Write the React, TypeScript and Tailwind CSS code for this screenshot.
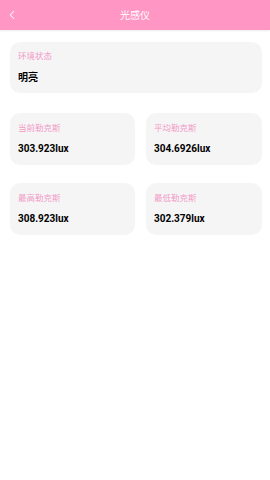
import { ChevronLeft } from 'lucide-react';

const stats = [
  { label: '当前勒克斯', value: '303.923lux' },
  { label: '平均勒克斯', value: '304.6926lux' },
  { label: '最高勒克斯', value: '308.923lux' },
  { label: '最低勒克斯', value: '302.379lux' },
];

function StatCard({ label, value }: { label: string; value: string }) {
  return (
    <div className="flex h-[52px] flex-col justify-center gap-[11px] rounded-[10px] bg-[#f5f5f5] px-[8px]">
      <div className="text-[8.5px] leading-none text-[#f29ac7]">{label}</div>
      <div className="text-[10px] font-bold leading-none text-black">{value}</div>
    </div>
  );
}

export default function App() {
  return (
    <div
      className="min-h-[480px] w-[270px] bg-white"
      style={{ fontFamily: 'Roboto, "Noto Sans CJK SC", sans-serif' }}
    >
      <header className="relative flex h-[30px] items-center justify-center bg-[#ff96c4] shadow-[0_1px_2px_rgba(0,0,0,0.08)]">
        <ChevronLeft className="absolute left-[5px] top-[8px] h-[14px] w-[14px] text-white" strokeWidth={1.75} />
        <h1 className="text-[10px] text-white">光感仪</h1>
      </header>
      <main className="flex flex-col gap-[20px] pt-[12px] pl-[10px] pr-[8px]">
        <div className="flex h-[51px] flex-col justify-center gap-[12px] rounded-[10px] bg-[#f5f5f5] px-[8px]">
          <div className="text-[8.5px] leading-none text-[#f29ac7]">环境状态</div>
          <div className="text-[10px] font-bold leading-none text-black">明亮</div>
        </div>
        <div className="grid grid-cols-[125px_1fr] gap-x-[11px] gap-y-[18px]">
          {stats.map((s) => (
            <StatCard key={s.label} label={s.label} value={s.value} />
          ))}
        </div>
      </main>
    </div>
  );
}
